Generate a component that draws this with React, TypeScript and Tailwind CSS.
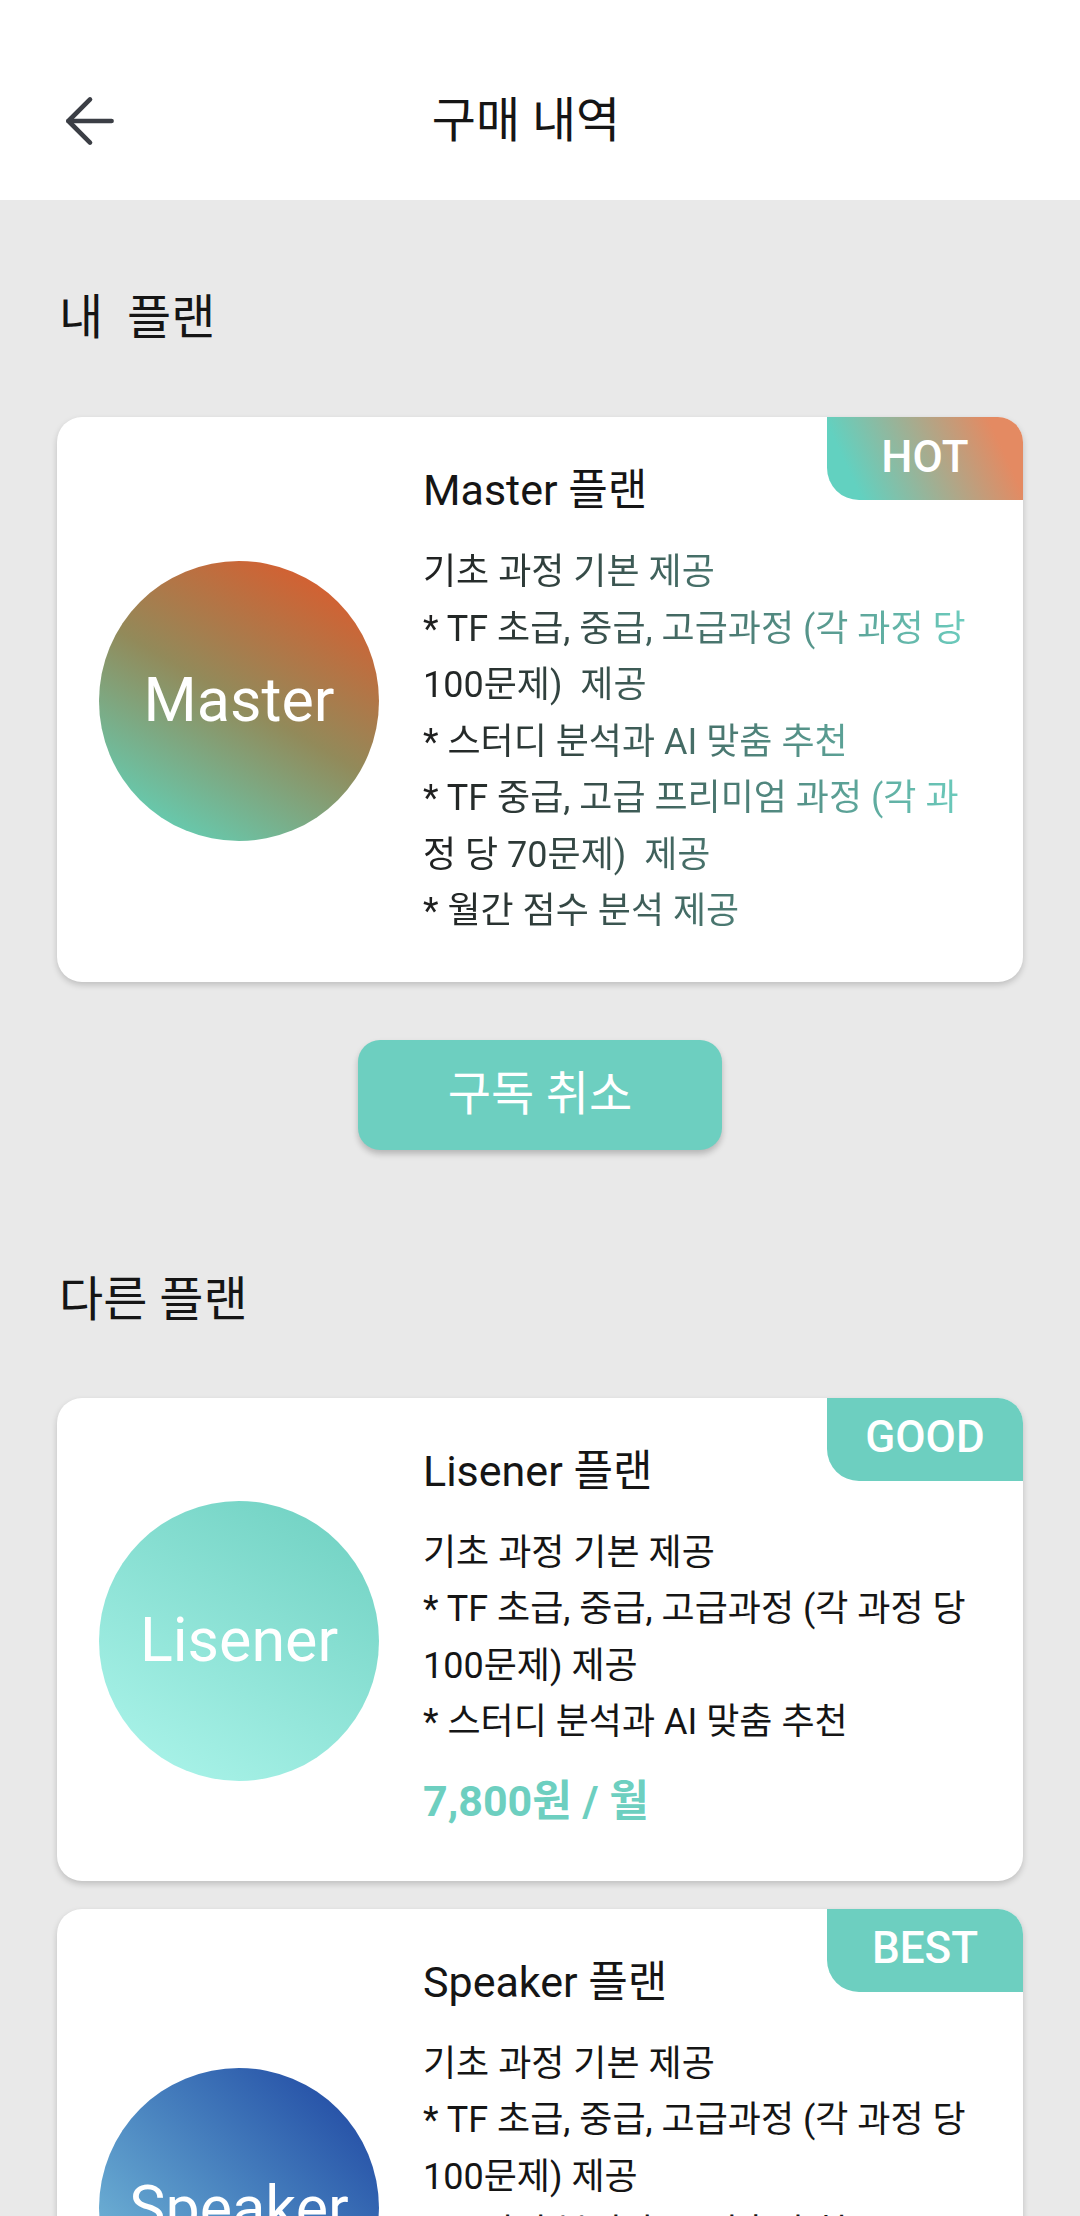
import { ArrowLeft } from "lucide-react"

type Plan = {
  name: string
  badge: string
  badgeClass: string
  circleClass: string
  lines: string[]
  gradientText?: boolean
  price?: string
}

const myPlan: Plan = {
  name: "Master",
  badge: "HOT",
  badgeClass: "bg-linear-[65deg] from-[#62d1c0] from-15% to-[#e48a62] to-85%",
  circleClass: "bg-linear-[210deg] from-[#e0582a] from-5% via-[#928a5a] to-[#5ed6be] to-95%",
  gradientText: true,
  lines: [
    "기초 과정 기본 제공",
    "* TF 초급, 중급, 고급과정 (각 과정 당",
    "100문제)  제공",
    "* 스터디 분석과 AI 맞춤 추천",
    "* TF 중급, 고급 프리미엄 과정 (각 과",
    "정 당 70문제)  제공",
    "* 월간 점수 분석 제공",
  ],
}

const otherPlans: Plan[] = [
  {
    name: "Lisener",
    badge: "GOOD",
    badgeClass: "bg-[#6dcfc0]",
    circleClass: "bg-linear-[210deg] from-[#6dcfc0] to-[#aef6ec]",
    lines: ["기초 과정 기본 제공", "* TF 초급, 중급, 고급과정 (각 과정 당", "100문제) 제공", "* 스터디 분석과 AI 맞춤 추천"],
    price: "7,800원 / 월",
  },
  {
    name: "Speaker",
    badge: "BEST",
    badgeClass: "bg-[#6dcfc0]",
    circleClass: "bg-linear-to-bl from-[#1e3f9e] to-[#86cde0]",
    lines: [
      "기초 과정 기본 제공",
      "* TF 초급, 중급, 고급과정 (각 과정 당",
      "100문제) 제공",
      "* 스터디 분석과 AI 맞춤 추천",
      "* TF 중급, 고급 프리미엄 과정 (각 과",
      "정 당 70문제) 제공",
    ],
    price: "12,800원 / 월",
  },
]

function PlanCard({ plan }: { plan: Plan }) {
  return (
    <div className="relative flex items-center overflow-hidden rounded-[25px] bg-white pt-[45px] pb-[42px] pl-[42px] pr-[20px] shadow-[0_3px_6px_rgba(0,0,0,0.18)]">
      <div
        className={`flex h-[280px] w-[280px] shrink-0 items-center justify-center rounded-full text-[61px] leading-none text-white ${plan.circleClass}`}
      >
        {plan.name}
      </div>
      <div className="ml-[44px] flex-1">
        <div className="text-[43px] leading-[56px] text-[#151515]">{plan.name} 플랜</div>
        <div
          className={`mt-[26px] text-[36px] leading-[56.5px] ${
            plan.gradientText
              ? "bg-linear-to-r from-[#1e1e1e] to-[#6dcfc0] to-95% bg-clip-text text-transparent"
              : "text-[#151515]"
          }`}
        >
          {plan.lines.map((line) => (
            <div key={line} className="whitespace-pre">
              {line}
            </div>
          ))}
        </div>
        {plan.price && (
          <div className="mt-[20px] mb-[8px] text-[43px] font-bold leading-[60px] text-[#6dcfc0]">{plan.price}</div>
        )}
      </div>
      <div
        className={`absolute right-0 top-0 flex h-[83px] w-[196px] items-center justify-center rounded-bl-[32px] pb-[4px] text-[44px] font-medium text-white ${plan.badgeClass}`}
      >
        {plan.badge}
      </div>
    </div>
  )
}

export default function App() {
  return (
    <div className="min-h-screen bg-[#e9e9e9] font-[Roboto,'Noto_Sans_CJK_KR',sans-serif]">
      <header className="flex h-[200px] items-center bg-white pt-[42px] pl-[53px] pr-[155px]">
        <ArrowLeft size={74} strokeWidth={1.5} color="#3b3e45" />
        <h1 className="flex-1 text-center text-[48px] font-normal text-[#151515]">구매 내역</h1>
      </header>

      <main className="px-[57px] pt-[86px] pb-[40px]">
        <h2 className="whitespace-pre pl-[2px] text-[48px] leading-[64px] text-[#151515]">내  플랜</h2>
        <div className="mt-[67px]">
          <PlanCard plan={myPlan} />
        </div>
        <div className="mt-[58px] flex justify-center">
          <button className="h-[110px] w-[364px] rounded-[22px] bg-[#6dcfc0] text-[47px] text-white shadow-[0_4px_6px_rgba(0,0,0,0.22)]">
            구독 취소
          </button>
        </div>

        <h2 className="mt-[118px] pl-[2px] text-[48px] leading-[64px] text-[#151515]">다른 플랜</h2>
        <div className="mt-[66px] flex flex-col gap-[28px]">
          {otherPlans.map((plan) => (
            <PlanCard key={plan.name} plan={plan} />
          ))}
        </div>
      </main>
    </div>
  )
}
